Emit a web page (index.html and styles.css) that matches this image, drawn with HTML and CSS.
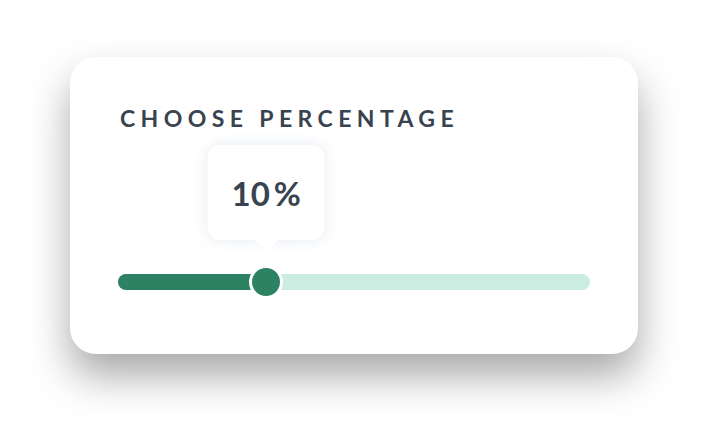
FILE: index.html
```html
<!DOCTYPE html>
<html>
<head>
<meta charset="utf-8">
<link rel="stylesheet" href="styles.css">
</head>
<body>
<div class="card">
  <h1 class="title">CHOOSE PERCENTAGE</h1>
  <div class="slider">
    <div class="track"></div>
    <div class="fill" style="width: 31.4%"></div>
    <div class="thumb" style="left: 31.4%"></div>
    <div class="tooltip" style="left: 31.4%">
      <span class="value">10<span class="pct">%</span></span>
    </div>
  </div>
</div>
</body>
</html>
```
FILE: styles.css
```css
html, body {
  margin: 0;
  padding: 0;
  background: #ffffff;
}
body {
  width: 708px;
  height: 438px;
  overflow: hidden;
  font-family: Lato, "Noto Sans", sans-serif;
}
.card {
  margin: 57px 0 0 70px;
  width: 568px;
  height: 297px;
  box-sizing: border-box;
  padding: 47px 48px 0 48px;
  background: #ffffff;
  border-radius: 26px;
  box-shadow: 0 22px 40px rgba(0, 0, 0, 0.34);
}
.title {
  margin: 0 0 0 2px;
  font-size: 23px;
  line-height: 28px;
  font-weight: 700;
  letter-spacing: 5.4px;
  color: #38434f;
}
.slider {
  position: relative;
  margin-top: 142px;
  width: 472px;
  height: 16px;
}
.track {
  height: 16px;
  border-radius: 8px;
  background: #cbece0;
}
.fill {
  position: absolute;
  left: 0;
  top: 0;
  height: 16px;
  border-radius: 8px 0 0 8px;
  background: #2e8264;
}
.thumb {
  position: absolute;
  top: 50%;
  width: 34px;
  height: 34px;
  box-sizing: border-box;
  border-radius: 50%;
  border: 3px solid #ffffff;
  background: #2e8264;
  transform: translate(-50%, -50%);
}
.tooltip {
  position: absolute;
  bottom: calc(100% + 34px);
  width: 117px;
  height: 95px;
  transform: translateX(-50%);
  background: #ffffff;
  border-radius: 13px;
  box-shadow: 0 0 14px rgba(170, 185, 210, 0.3);
  display: flex;
  align-items: center;
  justify-content: center;
}
.tooltip::after {
  content: "";
  position: absolute;
  left: 50%;
  top: 100%;
  transform: translateX(-50%);
  border-left: 12px solid transparent;
  border-right: 12px solid transparent;
  border-top: 12px solid #ffffff;
}
.value {
  font-size: 33px;
  font-weight: 700;
  color: #38434f;
  margin-top: 1px;
}
.pct {
  margin-left: 4px;
}
```
